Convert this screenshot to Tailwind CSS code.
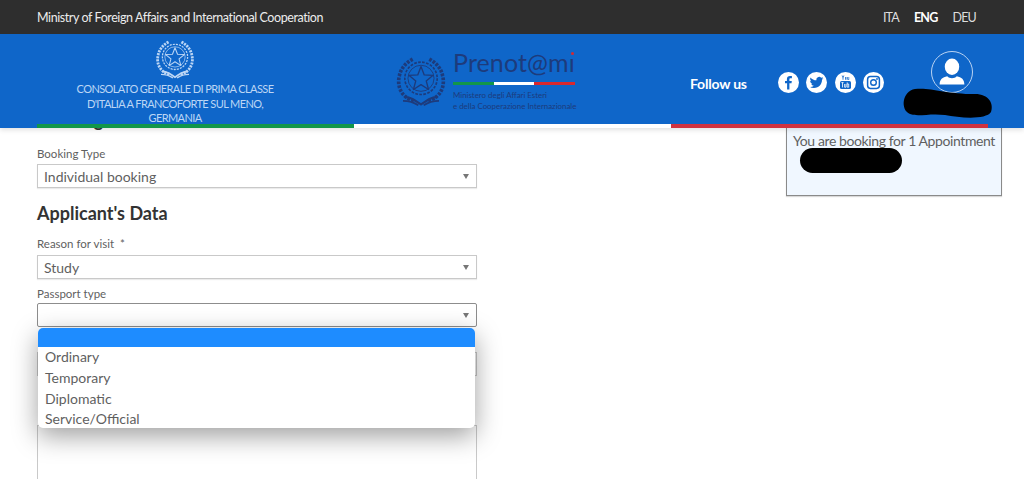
<!DOCTYPE html>
<html lang="en">
<head>
    <meta charset="UTF-8">
    <meta name="viewport" content="width=device-width, initial-scale=1.0">
    <title>Prenot@mi - Booking</title>
    <script src="https://cdn.jsdelivr.net/npm/@tailwindcss/browser@4"></script>
</head>
<body class="bg-white text-[#5f5f5f] font-['Lato',sans-serif] h-[479px] overflow-hidden relative">

    <!-- emblem, used twice in the header -->
    <svg class="hidden">
        <symbol id="emblem" viewBox="0 0 60 60">
            <g fill="none" stroke="currentColor">
                <path stroke-width="4" stroke-dasharray="3 1.4" d="M22 52C8 48 3 36 6 24 8 15 14 9 22 5"/>
                <path stroke-width="4" stroke-dasharray="3 1.4" d="M38 52c14-4 19-16 16-28-2-9-8-15-16-19"/>
                <circle cx="30" cy="27" r="18" stroke-width="1.800" stroke-dasharray="3 1.5"/>
                <circle cx="30" cy="27" r="14.500" stroke-width="1"/>
                <path stroke-width="1.500" stroke-linejoin="round" d="M30 14l3.600 9.200 9.800.5-7.600 6.200 2.600 9.500-8.400-5.400-8.400 5.400 2.600-9.500-7.600-6.200 9.800-.5z"/>
                <path stroke-width="2.400" d="M12 48c6 0 9 2 18 8 9-6 12-8 18-8"/>
                <path stroke-width="2" d="M10 52c7 0 11 1 17 5M50 52c-7 0-11 1-17 5"/>
            </g>
        </symbol>
    </svg>

    
    <header class="absolute top-0 inset-x-0 z-20 shadow-[0_2px_5px_rgba(0,0,0,0.12)]">
        <div class="h-[34px] pt-[2px] bg-[#2e2e2e] text-[#ececec] flex items-center justify-between pl-[37px] pr-[48px]">
            <span class="text-[12.5px] tracking-[-0.42px]">Ministry of Foreign Affairs and International Cooperation</span>
            <nav class="flex gap-[15px] text-[12.5px] tracking-[-0.8px] text-[#dedede]">
                <span>ITA</span>
                <span class="font-bold text-white">ENG</span>
                <span>DEU</span>
            </nav>
        </div>

        <div class="relative h-[94px] bg-[#0f66c9] flex">
            <!-- consulate -->
            <div class="w-[350px] pt-[2px] flex flex-col items-center text-[#bcd6f5]">
                <svg class="w-[42px] h-[46px]"><use href="#emblem"/></svg>
                <p class="text-[11px] leading-[14.5px] text-center tracking-[-0.6px] whitespace-nowrap">CONSOLATO GENERALE DI PRIMA CLASSE<br>D'ITALIA A FRANCOFORTE SUL MENO,<br>GERMANIA</p>
            </div>

            <!-- logo -->
            <div class="flex ml-[44px] pt-[16px] text-[#1d3b7c]">
                <svg class="w-[54px] h-[62px]"><use href="#emblem"/></svg>
                <div class="relative ml-[5px] w-[122px]">
                    <div class="text-[25px] leading-[26px] -mt-[1px] tracking-[0.1px] whitespace-nowrap">Prenot@mı</div>
                    <span class="absolute right-[1px] top-[2px] w-[3px] h-[3px] rounded-full bg-[#d8282f]"></span>
                    <div class="flex h-[3px] mt-[7px]">
                        <span class="flex-1 bg-[#12964a]"></span>
                        <span class="flex-1 bg-white"></span>
                        <span class="flex-1 bg-[#d8282f]"></span>
                    </div>
                    <p class="text-[7.9px] leading-[11px] mt-[5px] whitespace-nowrap">Ministero degli Affari Esteri<br>e della Cooperazione Internazionale</p>
                </div>
            </div>

            <!-- follow us -->
            <div class="ml-[115px] pt-[39px] text-[14px] font-bold text-white tracking-[-0.2px]">Follow us</div>
            <div class="ml-[31px] pt-[38px] flex gap-[7.5px]">
                <svg class="w-[21px] h-[21px]" viewBox="0 0 21 21">
                    <circle cx="10.5" cy="10.5" r="10.5" fill="#fff"/>
                    <path fill="#0f66c9" d="M11.400 17.500v-6.200h2.100l.3-2.400h-2.400V7.400c0-.7.2-1.200 1.200-1.200h1.300V4.100c-.2 0-1-.1-1.900-.1-1.900 0-3.100 1.100-3.100 3.200v1.700H7v2.400h2.100v6.200z"/>
                </svg>
                <svg class="w-[21px] h-[21px]" viewBox="0 0 21 21">
                    <circle cx="10.5" cy="10.5" r="10.5" fill="#fff"/>
                    <path fill="#0f66c9" transform="translate(3.6 3.6) scale(.575)" d="M23.95 4.57a10 10 0 0 1-2.820.77 4.960 4.960 0 0 0 2.160-2.720c-.95.55-2 .95-3.130 1.180a4.920 4.920 0 0 0-8.380 4.480C7.690 8.090 4.070 6.130 1.640 3.160a4.820 4.820 0 0 0-.66 2.480c0 1.710.87 3.210 2.190 4.100a4.900 4.900 0 0 1-2.230-.62v.06a4.920 4.920 0 0 0 3.950 4.830 4.900 4.900 0 0 1-2.210.08 4.940 4.940 0 0 0 4.600 3.420A9.870 9.870 0 0 1 0 19.540a14 14 0 0 0 7.560 2.210c9.050 0 14-7.500 14-13.980 0-.21 0-.42-.02-.63a9.940 9.940 0 0 0 2.460-2.550z"/>
                </svg>
                <svg class="w-[21px] h-[21px]" viewBox="0 0 21 21">
                    <circle cx="10.5" cy="10.5" r="10.5" fill="#fff"/>
                    <path fill="#0f66c9" d="M6.600 3.500l1 2.200v2h.8v-2l1-2.200h-.8l-.6 1.400-.6-1.400zM10.200 4.900h1.200v2.800h-1.200zM12.200 4.900v2.400c0 .5.7.6 1.300.1v.3h.7V4.900h-.7v2c-.2.2-.6.3-.6 0v-2z"/>
                    <rect x="5" y="9" width="11" height="8" rx="1.6" fill="#0f66c9"/>
                    <path stroke="#fff" stroke-width=".8" fill="none" d="M6.400 10.600h2.200M7.500 10.600v4.800M9.600 12v3.200h1.400V12M12.200 10.400v4.800h1.500V12h-1.500"/>
                </svg>
                <svg class="w-[21px] h-[21px]" viewBox="0 0 21 21">
                    <circle cx="10.5" cy="10.5" r="10.5" fill="#fff"/>
                    <rect x="4.6" y="4.6" width="11.8" height="11.8" rx="2.8" fill="none" stroke="#0f66c9" stroke-width="1.5"/>
                    <circle cx="10.5" cy="10.5" r="2.8" fill="none" stroke="#0f66c9" stroke-width="1.4"/>
                    <circle cx="14" cy="7" r=".9" fill="#0f66c9"/>
                </svg>
            </div>

            <!-- user -->
            <div class="absolute left-[931px] top-[17px] w-[42px] h-[42px] rounded-full border border-[#b9d3f3] overflow-hidden">
                <svg class="w-full h-full" viewBox="0 0 42 42">
                    <ellipse cx="21" cy="15.5" rx="7.6" ry="8.6" fill="#fff"/>
                    <path fill="#fff" d="M8 34c0-5 3-7.500 8-8.500 1.500 1.500 3 2 5 2s3.500-.5 5-2c5 1 8 3.500 8 8.500z"/>
                </svg>
            </div>

            <!-- tricolour stripe along the header's lower edge -->
            <div class="absolute left-[37px] bottom-0 w-[951px] h-[4px] flex">
                <span class="flex-1 bg-[#12964a]"></span>
                <span class="flex-1 bg-white"></span>
                <span class="flex-1 bg-[#d0323f]"></span>
            </div>
        </div>
    </header>

    <!-- scribbled out user name -->
    <svg class="absolute left-0 top-0 z-30 w-[1024px] h-[130px] pointer-events-none" viewBox="0 0 1024 130">
        <path fill="#000" d="M915 89c15-2 30 5 60 5 14 0 19 10 16 18-5 8-31 6-46 3-15-2-27 2-35-1-10-4-8-23 5-25z"/>
    </svg>

    <main class="flex pl-[37px] pr-[22px] pt-[108px]">
        <!-- booking form -->
        <form class="w-[440px] shrink-0 relative">
            <h2 class="text-[18px] leading-[24px] font-bold text-[#333]">Booking</h2>

            <label class="block mt-[14px] text-[11.5px] leading-[16px]">Booking Type</label>
            <div class="mt-[2px] h-[24px] border border-[#c9c9c9] shadow-[0_1px_1px_rgba(0,0,0,0.08)] flex items-center justify-between pl-[6px] pr-[7px] text-[14px]">
                <span>Individual booking</span>
                <span class="w-0 h-0 border-x-[3.5px] border-x-transparent border-t-[5px] border-t-[#777]"></span>
            </div>

            <h2 class="mt-[12px] text-[18px] leading-[26px] font-bold text-[#333]">Applicant's Data</h2>

            <label class="block mt-[10px] text-[11.5px] leading-[16px]">Reason for visit &nbsp;*</label>
            <div class="mt-[3px] h-[24px] border border-[#c9c9c9] shadow-[0_1px_1px_rgba(0,0,0,0.08)] flex items-center justify-between pl-[6px] pr-[7px] text-[14px]">
                <span>Study</span>
                <span class="w-0 h-0 border-x-[3.5px] border-x-transparent border-t-[5px] border-t-[#777]"></span>
            </div>

            <label class="block mt-[7px] text-[11.5px] leading-[16px]">Passport type</label>
            <div class="mt-[1px] h-[24px] border border-[#8d8d8d] rounded-[2px] flex items-center justify-end pl-[6px] pr-[7px] text-[14px]">
                <span class="w-0 h-0 border-x-[3.5px] border-x-transparent border-t-[5px] border-t-[#777]"></span>
            </div>

            <!-- open list of the passport type select -->
            <ul class="absolute z-10 left-[1px] top-[220px] w-[437px] h-[100px] bg-white rounded-[5px] overflow-hidden shadow-[0_8px_26px_rgba(0,0,0,0.38)] text-[14px] leading-[20.8px]">
                <li class="h-[19px] bg-[#1e8cff]"></li>
                <li class="pl-[7px]">Ordinary</li>
                <li class="pl-[7px]">Temporary</li>
                <li class="pl-[7px]">Diplomatic</li>
                <li class="pl-[7px]">Service/Official</li>
            </ul>

            <div class="mt-[25px] h-[24px] border border-[#c9c9c9]"></div>
            <div class="mt-[49px] h-[54px] border border-b-0 border-[#c9c9c9]"></div>
        </form>

        <!-- booking summary -->
        <aside class="ml-auto w-[216px] h-[90px] -mt-[2px] border border-[#8a8a8a] bg-[#f0f7ff] px-[6px] shadow-[0_1px_1px_rgba(0,0,0,0.15)]">
            <div class="h-[20px] border-b-2 border-[#3f83d4]"></div>
            <p class="mt-[4px] text-[14px] leading-[20px] whitespace-nowrap tracking-[-0.4px]">You are booking for 1 Appointment</p>
            <div class="ml-[7px] mt-[-3px] w-[102px] h-[25px] rounded-full bg-black"></div>
        </aside>
    </main>
</body>
</html>
